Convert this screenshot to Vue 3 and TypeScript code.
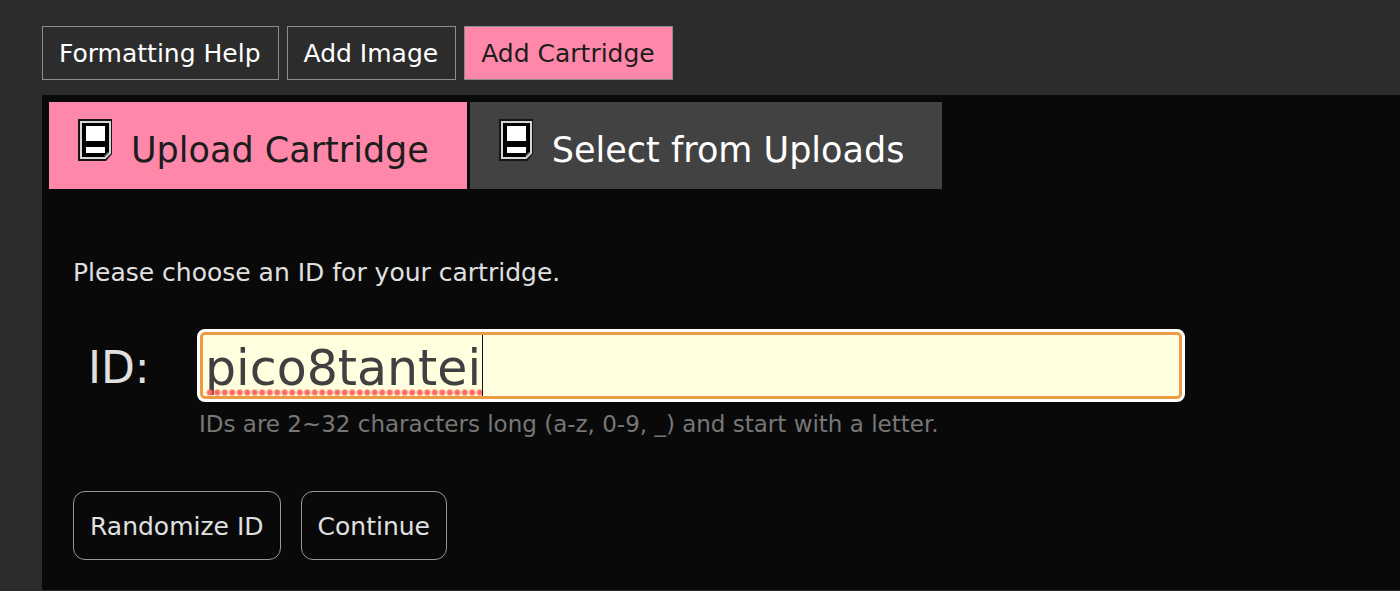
<script setup lang="ts">
import { nextTick, onMounted, ref, watch } from 'vue'

const tools = ['Formatting Help', 'Add Image', 'Add Cartridge']
const tabs = ['Upload Cartridge', 'Select from Uploads']
const activeTool = ref('Add Cartridge')
const activeTab = ref('Upload Cartridge')
const cartId = ref('pico8tantei')
const field = ref<HTMLInputElement | null>(null)
const textWidth = ref(0)

function measure(): void {
  const context = document.createElement('canvas').getContext('2d')
  if (!field.value || !context) return
  const style = getComputedStyle(field.value)
  context.font = `${style.fontSize} ${style.fontFamily}`
  textWidth.value = Math.round(context.measureText(cartId.value).width)
}

function randomize(): void {
  cartId.value = 'cart_' + Math.random().toString(36).slice(2, 10)
}

function submit(): void {
  field.value?.focus()
}

onMounted(measure)
watch(cartId, () => nextTick(measure))
</script>

<template>
  <main class="page">
    <nav class="tools">
      <button
        v-for="tool in tools"
        :key="tool"
        type="button"
        class="tool"
        :class="{ active: tool === activeTool }"
        @click="activeTool = tool"
      >{{ tool }}</button>
    </nav>

    <section class="panel">
      <div class="tabs">
        <button
          v-for="tab in tabs"
          :key="tab"
          type="button"
          class="tab"
          :class="{ active: tab === activeTab }"
          @click="activeTab = tab"
        >
          <svg class="cart" viewBox="0 0 36 44" aria-hidden="true">
            <path d="M1 1H35V36L29 43H1Z" fill="#161616" />
            <path d="M4 4H33V35L28 40H4Z" fill="#000" stroke="#d4d6d4" stroke-width="2" />
            <path d="M26 39V36H29V33H32" fill="none" stroke="#000" stroke-width="2" />
            <path d="M28 38V37H30V35H32" fill="none" stroke="#888" stroke-width="1" />
            <path d="M9 8H28V23H9ZM9 29H28V35H9Z" fill="#fff" />
          </svg>
          <span>{{ tab }}</span>
        </button>
      </div>

      <form class="form" @submit.prevent="submit">
        <p class="intro">Please choose an ID for your cartridge.</p>
        <div class="row">
          <label class="label" for="cart-id">ID:</label>
          <div class="control">
            <input
              id="cart-id"
              ref="field"
              v-model="cartId"
              class="field"
              type="text"
              maxlength="32"
              spellcheck="false"
              autocomplete="off"
              aria-describedby="cart-hint"
            />
            <span class="marks" :style="{ width: textWidth + 'px' }" aria-hidden="true"></span>
          </div>
          <p id="cart-hint" class="hint">IDs are 2~32 characters long (a-z, 0-9, _) and start with a letter.</p>
        </div>
        <div class="actions">
          <button type="button" class="action" @click="randomize">Randomize ID</button>
          <button type="submit" class="action">Continue</button>
        </div>
      </form>
    </section>
  </main>
</template>

<style>
body {
  background: #2c2c2c;
}
</style>

<style scoped>
.page {
  box-sizing: border-box;
  padding: 26px 0 1px 42px;
  color: #e0e0e0;
  font-family: Verdana, "DejaVu Sans", sans-serif;
  font-size: 25px;
}

button,
input {
  font-family: inherit;
  margin: 0;
}

.tools {
  display: flex;
  gap: 8px;
  margin-bottom: 15px;
}

.tool {
  padding: 2px 17px 0 16px;
  border: 1px solid #8c8c8c;
  background: transparent;
  color: #fff;
  font-size: 25px;
  line-height: 50px;
}

.tool.active {
  background: #ff88aa;
  color: #1c1c1c;
}

.panel {
  padding: 7px 7px 30px;
  background: #090909;
}

.tabs {
  display: flex;
  gap: 3px;
}

.tab {
  display: flex;
  align-items: flex-start;
  gap: 18px;
  padding: 16px 38px 13px 28px;
  border: 0;
  background: #424242;
  color: #fff;
  font-size: 35px;
  line-height: 52px;
}

.tab span {
  padding-top: 6px;
  white-space: nowrap;
}

.tab.active {
  background: #ff88aa;
  color: #1c1c1c;
}

.cart {
  flex: none;
  width: 36px;
  height: 44px;
}

.form {
  padding: 68px 24px 0;
}

.intro {
  margin: 0;
  line-height: 32px;
}

.row {
  display: grid;
  grid-template-columns: 124px minmax(0, 988px);
  align-items: center;
  margin-top: 40px;
}

.label {
  padding: 4px 0 0 15px;
  font-size: 44px;
  line-height: 60px;
}

.control {
  position: relative;
}

.field {
  display: block;
  box-sizing: border-box;
  width: 100%;
  height: 73px;
  padding: 5px 5px 0;
  border: 3px solid #fff;
  border-radius: 8px;
  outline: 3px solid #ee9b48;
  outline-offset: -6px;
  background: #ffffe0;
  color: #404040;
  font-size: 49px;
}

.marks {
  position: absolute;
  top: 6px;
  bottom: 6px;
  left: 9px;
  border-right: 1px solid #111;
  background: radial-gradient(circle, #ff6b60 2px, transparent 4px) 0 100% / 0.15em 7px repeat-x;
  font-size: 50px;
  pointer-events: none;
}

.hint {
  grid-column: 2;
  margin: 7px 0 0;
  padding-left: 2px;
  color: #777;
  font-size: 23px;
  line-height: 30px;
}

.actions {
  display: flex;
  gap: 20px;
  margin-top: 52px;
}

.action {
  padding: 2px 16px 0;
  border: 1px solid #999;
  border-radius: 12px;
  background: transparent;
  color: #e0e0e0;
  font-size: 25px;
  line-height: 65px;
}
</style>
